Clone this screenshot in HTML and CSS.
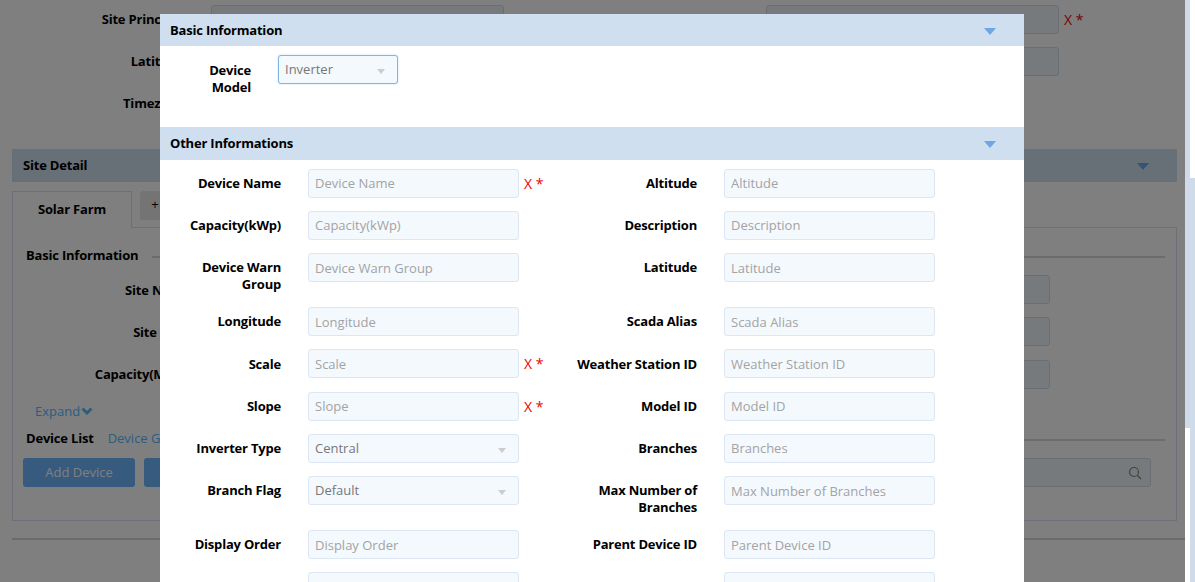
FILE: index.html
```html
<!DOCTYPE html>
<html lang="en">
<head>
    <meta charset="UTF-8">
    <title>Site Detail</title>
    <link rel="stylesheet" href="styles.css">
</head>
<body>

<div class="shell">
    <div class="page">
        <div class="site-form">
            <div class="field"><label>Site Principal</label><input class="page-input"><span class="err">X *</span></div>
            <div class="field"><label>Site Owner</label><input class="page-input"><span class="err">X *</span></div>
            <div class="field"><label>Latitude</label><input class="page-input"></div>
            <div class="field"><label>Longitude</label><input class="page-input"></div>
            <div class="field"><label>Timezone</label></div>
        </div>

        <div class="bar">Site Detail<span class="arrow arrow-dark"></span></div>

        <div class="tabs">
            <div class="tab tab-active">Solar Farm</div>
            <div class="tab tab-add">+</div>
        </div>
        <div class="tab-panel">
            <div class="section-title"><b>Basic Information</b><span class="rule"></span></div>
            <div class="panel-form">
                <div class="field"><label>Site Name</label><input class="page-input"></div>
                <div class="field"><label>Site Type</label><input class="page-input"></div>
                <div class="field"><label>Capacity(MWp)</label><input class="page-input"></div>
            </div>
            <a class="expand">Expand<svg width="12" height="9" viewBox="0 0 12 9"><path d="M1.5 1.5 6 6l4.5-4.5" fill="none" stroke="#56baff" stroke-width="3"/></svg></a>
            <div class="section-title list-title"><b>Device List</b><a class="link">Device Group</a><span class="rule"></span></div>
            <div class="toolbar">
                <button class="btn">Add Device</button>
                <button class="btn">Import</button>
                <div class="search">
                    <svg width="14" height="14" viewBox="0 0 14 14"><circle cx="6" cy="6" r="4.5" fill="none" stroke="#888" stroke-width="1.2"/><path d="M9.5 9.5 13 13" stroke="#888" stroke-width="1.5"/></svg>
                </div>
            </div>
        </div>
        <div class="page-rule"></div>
    </div>

    <div class="overlay"></div>

    <div class="modal">
        <div class="modal-head">Basic Information<span class="arrow"></span></div>
        <div class="model-row">
            <label>Device Model</label>
            <div class="select select-focus">Inverter<span class="caret"></span></div>
        </div>

        <div class="modal-head modal-head-other">Other Informations<span class="arrow"></span></div>
        <div class="modal-form">
            <div class="row">
                <div class="cell"><label>Device Name</label><input placeholder="Device Name"><span class="err">X *</span></div>
                <div class="cell cell-right"><label>Altitude</label><input placeholder="Altitude"></div>
            </div>
            <div class="row">
                <div class="cell"><label>Capacity(kWp)</label><input placeholder="Capacity(kWp)"></div>
                <div class="cell cell-right"><label>Description</label><input placeholder="Description"></div>
            </div>
            <div class="row row-tall">
                <div class="cell"><label>Device Warn Group</label><input placeholder="Device Warn Group"></div>
                <div class="cell cell-right"><label>Latitude</label><input placeholder="Latitude"></div>
            </div>
            <div class="row">
                <div class="cell"><label>Longitude</label><input placeholder="Longitude"></div>
                <div class="cell cell-right"><label>Scada Alias</label><input placeholder="Scada Alias"></div>
            </div>
            <div class="row">
                <div class="cell"><label>Scale</label><input placeholder="Scale"><span class="err">X *</span></div>
                <div class="cell cell-right"><label>Weather Station ID</label><input placeholder="Weather Station ID"></div>
            </div>
            <div class="row">
                <div class="cell"><label>Slope</label><input placeholder="Slope"><span class="err">X *</span></div>
                <div class="cell cell-right"><label>Model ID</label><input placeholder="Model ID"></div>
            </div>
            <div class="row">
                <div class="cell"><label>Inverter Type</label><div class="select select-wide">Central<span class="caret"></span></div></div>
                <div class="cell cell-right"><label>Branches</label><input placeholder="Branches"></div>
            </div>
            <div class="row row-tall">
                <div class="cell"><label>Branch Flag</label><div class="select select-wide">Default<span class="caret"></span></div></div>
                <div class="cell cell-right"><label>Max Number of Branches</label><input placeholder="Max Number of Branches"></div>
            </div>
            <div class="row">
                <div class="cell"><label>Display Order</label><input placeholder="Display Order"></div>
                <div class="cell cell-right"><label>Parent Device ID</label><input placeholder="Parent Device ID"></div>
            </div>
            <div class="row">
                <div class="cell"><input class="no-label"></div>
                <div class="cell cell-right"><input class="no-label"></div>
            </div>
        </div>
    </div>
</div>

<div class="strip">
    <div class="strip-col">
        <div class="strip-blue strip-long"></div>
        <div class="strip-white"></div>
    </div>
    <div class="strip-col">
        <div class="strip-white strip-short"></div>
        <div class="strip-blue"></div>
    </div>
</div>

</body>
</html>
```

FILE: styles.css
```css
html, body {
    margin: 0;
    height: 582px;
    overflow: hidden;
}
body {
    display: flex;
    background-color: #fff;
    font-family: "Open Sans", "Noto Sans", sans-serif;
    font-size: 13px;
    color: #000;
}
input, button {
    font-family: inherit;
    font-size: 13px;
    box-sizing: border-box;
}
label, b, .bar, .tab-active, .modal-head {
    font-weight: bold;
    letter-spacing: -0.2px;
}
label {
    text-align: right;
    line-height: 17px;
}

/* page behind the dialog */
.shell {
    position: relative;
    width: 1185px;
    height: 582px;
    overflow: hidden;
    flex: none;
}
.page {
    padding: 5px 0 0 12px;
}
.site-form {
    display: grid;
    grid-template-columns: 543px 1fr;
    row-gap: 14px;
    margin-left: -12px;
}
.field {
    display: flex;
    align-items: flex-start;
    height: 28px;
}
.field label {
    width: 184px;
    margin-right: 27px;
    padding-top: 6px;
    flex: none;
    white-space: nowrap;
}
.page-input {
    width: 293px;
    height: 29px;
    background-color: #eef4f9;
    border: 1px solid #d3dce8;
    border-radius: 3px;
    flex: none;
}
.err {
    color: #e00;
    font-size: 14px;
    margin-left: 5px;
    padding-top: 5px;
}
.site-form .field:nth-child(even) label {
    width: 196px;
}
.bar {
    position: relative;
    width: 1165px;
    height: 33px;
    line-height: 32px;
    margin-top: 32px;
    padding-left: 11px;
    box-sizing: border-box;
    background-color: #cfdfef;
}
.arrow {
    position: absolute;
    right: 28px;
    top: 14px;
    width: 0;
    height: 0;
    border-left: 6px solid transparent;
    border-right: 6px solid transparent;
    border-top: 7px solid #6ea6e6;
}
.tabs {
    display: flex;
    align-items: flex-start;
    gap: 8px;
    margin-top: 9px;
    height: 37px;
    width: 1165px;
}
.tab {
    height: 37px;
    box-sizing: border-box;
    text-align: center;
}
.tab-active {
    position: relative;
    width: 120px;
    line-height: 35px;
    background-color: #fff;
    border: 1px solid #d8deea;
    border-bottom: none;
}
.tab-add {
    width: 120px;
    height: 29px;
    line-height: 26px;
    background-color: #e8e8e8;
    border-radius: 4px 4px 0 0;
    padding-right: 90px;
}
.tab-panel {
    width: 1165px;
    height: 294px;
    box-sizing: border-box;
    margin-top: -1px;
    padding: 17px 11px 0 13px;
    border: 1px solid #d8deea;
}
.section-title {
    display: flex;
    align-items: center;
    height: 20px;
}
.section-title .rule {
    flex: 1;
    height: 2px;
    margin: 3px 0 0 14px;
    background-color: #d8d8d8;
}
.panel-form {
    display: flex;
    flex-direction: column;
    gap: 14.25px;
    margin-top: 10px;
}
.panel-form .field label {
    width: 164px;
    margin-right: 567px;
    padding-top: 6.5px;
}
.expand {
    display: block;
    margin: 14.5px 0 0 9px;
    color: #56baff;
}
.expand svg {
    margin-left: 1px;
}
.link {
    margin-left: 14px;
    color: #56baff;
}
.list-title {
    margin-top: 8px;
}
.toolbar {
    display: flex;
    gap: 9px;
    margin: 10px 0 0 -3px;
}
.btn {
    width: 112px;
    height: 29px;
    padding: 0 0 2px;
    color: #fff;
    background-color: #6eb4ff;
    border: none;
    border-radius: 3px;
}
.search {
    display: flex;
    align-items: center;
    justify-content: flex-end;
    width: 400px;
    height: 29px;
    margin-left: auto;
    margin-right: 14px;
    padding-right: 8px;
    box-sizing: border-box;
    background-color: #eef4f9;
    border: 1px solid #d3dce8;
    border-radius: 3px;
}
.page-rule {
    height: 2px;
    margin-top: 17px;
    background-color: #d6d6d6;
}
.overlay {
    position: absolute;
    inset: 0;
    background-color: rgba(0, 0, 0, 0.5);
}

/* dialog */
.modal {
    position: absolute;
    left: 160px;
    top: 14px;
    bottom: 0;
    width: 864px;
    overflow: hidden;
    background-color: #fff;
}
.modal-head {
    position: relative;
    height: 32px;
    line-height: 32px;
    padding-left: 10px;
    background-color: #cfdfef;
}
.modal-head-other {
    height: 33px;
}
.modal-form {
    padding-top: 8.7px;
}
.model-row {
    display: flex;
    height: 81px;
    padding-left: 21px;
    box-sizing: border-box;
}
.model-row label {
    width: 70px;
    margin: 16px 27px 0 0;
}
.select {
    position: relative;
    width: 120px;
    height: 29px;
    line-height: 26px;
    margin-top: 9px;
    padding-left: 6px;
    box-sizing: border-box;
    color: #777;
    background-color: #f4f9fe;
    border: 1px solid #dde6f2;
    border-radius: 3px;
}
.select-focus {
    border-color: #7fb6e6;
    box-shadow: 0 0 2px #b5d5f2;
}
.select-wide {
    width: 211px;
    margin-top: 0;
}
.caret {
    position: absolute;
    right: 12px;
    top: 13px;
    width: 0;
    height: 0;
    border-left: 4px solid transparent;
    border-right: 4px solid transparent;
    border-top: 5px solid #ccc;
}
.row {
    display: grid;
    grid-template-columns: 412px 1fr;
    height: 42.25px;
}
.row-tall {
    height: 54px;
}
.cell {
    display: flex;
    align-items: flex-start;
    padding-left: 9px;
}
.cell label {
    width: 112px;
    margin-right: 27px;
    padding-top: 6.1px;
    flex: none;
}
.cell-right {
    padding-left: 0;
}
.cell-right label {
    width: 125px;
    margin-right: 27px;
}
.cell input {
    width: 211px;
    height: 29px;
    padding: 0 6px;
    background-color: #f4f9fe;
    border: 1px solid #dde6f2;
    border-radius: 3px;
    flex: none;
}
.cell input::placeholder {
    color: #a3a3a3;
}
.cell .no-label {
    margin-left: 139px;
}
.cell-right .no-label {
    margin-left: 152px;
}

/* strip on the far right */
.strip {
    display: flex;
    flex: none;
    width: 10px;
    height: 582px;
}
.strip-col {
    display: flex;
    flex-direction: column;
    width: 5px;
}
.strip-blue {
    flex: 1;
    background-color: #cfdaea;
}
.strip-white {
    flex: 1;
    background-color: #fff;
}
.strip-long {
    flex: none;
    height: 428px;
}
.strip-short {
    flex: none;
    height: 178px;
}
```
